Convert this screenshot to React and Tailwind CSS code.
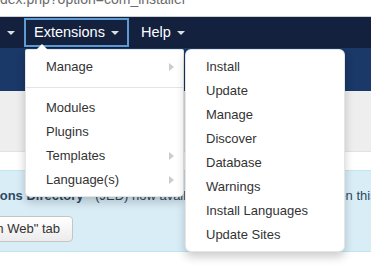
import React from "react";

const Caret = () => (
  <span className="inline-block w-0 h-0 border-t-[4px] border-t-[#dddddd] border-x-[4px] border-x-transparent" />
);

const SubArrow = () => (
  <span className="w-0 h-0 border-l-[5px] border-l-[#cccccc] border-y-[4px] border-y-transparent" />
);

function Item({ label, sub }) {
  return (
    <div className="h-[24px] flex items-center justify-between pl-[20px] pr-[9px] text-[13px] text-[#333333]">
      <span>{label}</span>
      {sub && <SubArrow />}
    </div>
  );
}

export default function App() {
  return (
    <div
      className="relative w-[371px] h-[276px] overflow-hidden bg-white"
      style={{ fontFamily: '"Liberation Sans", Arial, sans-serif' }}
    >
      {/* address bar, cut off */}
      <div className="h-[17px] border-b border-[#d0d0d0] overflow-hidden">
        <div className="-mt-[8px] text-[14px] leading-none text-[#6b6b6b] whitespace-nowrap">
          dex.php?option=com_installer
        </div>
      </div>

      {/* navbar */}
      <div className="h-[31px] bg-[#13213f] flex items-stretch text-[14.5px] text-white">
        <div className="flex items-center pl-[7px] pr-[9px]">
          <Caret />
        </div>
        <div className="my-[1px] flex items-center gap-[6px] px-[8px] border-2 border-[#5c9bd6]">
          <span>Extensions</span>
          <Caret />
        </div>
        <div className="flex items-center gap-[6px] px-[12px]">
          <span>Help</span>
          <Caret />
        </div>
      </div>

      {/* header band */}
      <div className="h-[43px] bg-[#1a3868]" />
      {/* toolbar */}
      <div className="h-[61px] bg-[#eeeeee] border-b border-[#e2e2e2]" />
      <div className="h-[18px]" />

      {/* info alert */}
      <div className="h-[82px] bg-[#d9edf7] border-y border-[#bce8f1] pt-[16px] text-[13px] text-[#2e4a62]">
        <p className="-ml-[100px] whitespace-nowrap leading-[18px]">
          <b>
            Joomla! Extensions Directory<span className="text-[8px] align-top">™</span>
          </b>{" "}
          (JED) now available with Install from Web on this page.
        </p>
        <div className="mt-[11px] -ml-[40px] w-[113px] h-[26px] flex items-center justify-end pr-[12px] rounded-[4px] border border-[#c5c5c5] bg-gradient-to-b from-white to-[#ececec] text-[#333333] whitespace-nowrap">
          Add "Install from Web" tab
        </div>
      </div>

      {/* Extensions dropdown */}
      <div className="absolute left-[25px] top-[49px] w-[159px] pt-[5px] pb-[4px] bg-white rounded-b-[5px] rounded-t-[2px] border border-black/10 shadow-[0_5px_10px_rgba(0,0,0,0.2)]">
        <span className="absolute -top-[6px] left-[10px] w-0 h-0 border-b-[6px] border-b-white border-x-[6px] border-x-transparent" />
        <Item label="Manage" sub />
        <div className="my-[8px] h-px bg-[#e5e5e5]" />
        <Item label="Modules" />
        <Item label="Plugins" />
        <Item label="Templates" sub />
        <Item label="Language(s)" sub />
      </div>

      {/* Manage submenu */}
      <div className="absolute left-[185px] top-[49px] w-[160px] pt-[5px] pb-[4px] bg-white rounded-[6px] border border-black/10 shadow-[0_5px_10px_rgba(0,0,0,0.2)]">
        <Item label="Install" />
        <Item label="Update" />
        <Item label="Manage" />
        <Item label="Discover" />
        <Item label="Database" />
        <Item label="Warnings" />
        <Item label="Install Languages" />
        <Item label="Update Sites" />
      </div>
    </div>
  );
}
